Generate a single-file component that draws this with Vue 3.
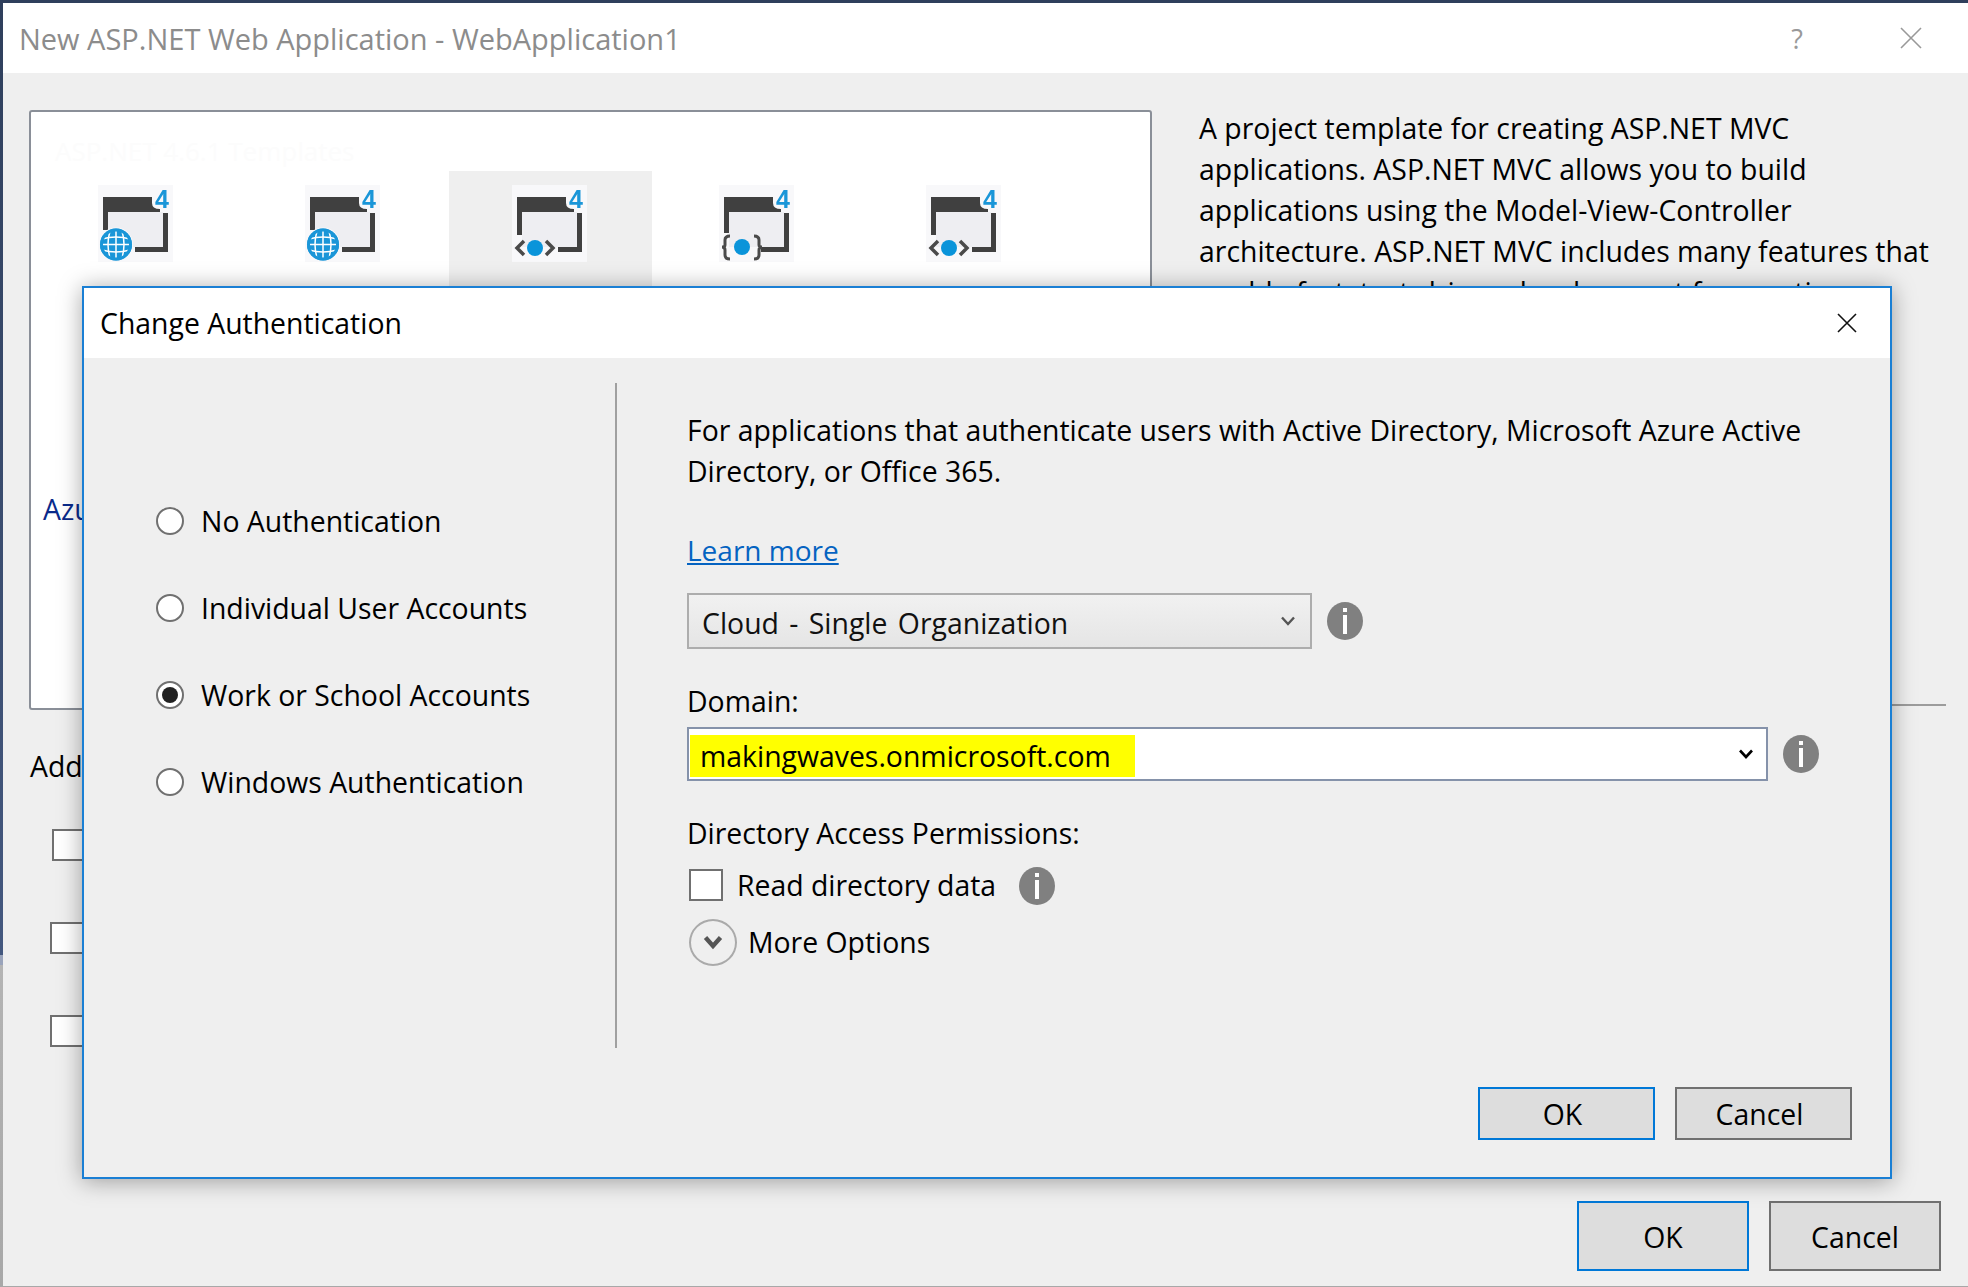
<script setup>
const tiles = [
  { id: 1, kind: 'globe' },
  { id: 2, kind: 'globe' },
  { id: 3, kind: 'code', selected: true },
  { id: 4, kind: 'brace' },
  { id: 5, kind: 'code' },
]
const authOptions = [
  { label: 'No Authentication' },
  { label: 'Individual User Accounts' },
  { label: 'Work or School Accounts', checked: true },
  { label: 'Windows Authentication' },
]
// where the window outline of each icon breaks for the overlaid badge
const wallStart = { globe: 40, code: 49, brace: 45 }
const wallEnd = { globe: 45, code: 50, brace: 48 }
</script>

<template>
  <div class="window">
    <div class="edge"></div>
    <div class="main">
      <header class="titlebar">
        <span class="title">New ASP.NET Web Application - WebApplication1</span>
        <span class="help">?</span>
        <svg class="close-grey" width="22" height="22" viewBox="0 0 22 22">
          <path d="M1 1 21 21M21 1 1 21" stroke="#999" stroke-width="1.6" fill="none" />
        </svg>
      </header>

      <div class="content">
        <div class="left">
          <div class="panel">
            <div class="faint">ASP.NET 4.6.1 Templates</div>
            <div class="tiles">
              <div v-for="t in tiles" :key="t.id" class="tile" :class="{ selected: t.selected }">
                <svg class="tile-icon" width="90" height="85" viewBox="0 0 90 85">
                  <rect x="3" y="0" width="75" height="77" fill="#f8f8fa" />
                  <rect x="13" y="27" width="55" height="35" fill="#eeeef2" />
                  <path d="M8 12H57V18Q57 24 65 24V27H8Z" fill="#404040" />
                  <rect x="8" y="27" width="5" :height="wallEnd[t.kind] - 27" fill="#404040" />
                  <rect x="68" y="28" width="5" height="39" fill="#404040" />
                  <rect :x="wallStart[t.kind]" y="62" :width="73 - wallStart[t.kind]" height="5" fill="#404040" />
                  <text x="60" y="23" class="four">4</text>
                  <g v-if="t.kind === 'globe'">
                    <circle cx="21" cy="59.5" r="17" fill="#f8f8fa" />
                    <circle cx="21" cy="59.5" r="16" fill="#1a96d8" />
                    <path d="M7 54Q21 50 35 54M7 65Q21 69 35 65M5 59.5H37" stroke="#fff" stroke-width="1.5" fill="none" />
                    <path d="M15 46Q11 59.5 15 73M27 46Q31 59.5 27 73M21 45V74" stroke="#fff" stroke-width="1.5" fill="none" />
                    <circle cx="21" cy="59.5" r="14.5" fill="none" stroke="#1a96d8" stroke-width="3" />
                  </g>
                  <g v-else-if="t.kind === 'code'">
                    <path d="M15 56 8 63 15 70M37 56 44 63 37 70" stroke="#4a4a4a" stroke-width="3.5" fill="none" />
                    <circle cx="26" cy="63" r="8" fill="#0a94da" />
                  </g>
                  <g v-else>
                    <path d="M14 51Q9 51 9 55V60Q9 62 6 62Q9 62 9 65V70Q9 74 14 74M38 51Q43 51 43 55V60Q43 62 46 62Q43 62 43 65V70Q43 74 38 74" stroke="#4a4a4a" stroke-width="3" fill="none" />
                    <circle cx="26" cy="62" r="8" fill="#0a94da" />
                  </g>
                </svg>
              </div>
            </div>
            <div class="azure">Azure</div>
          </div>
          <div class="add-label">Add folders</div>
          <div class="checks">
            <span class="check first"></span>
            <span class="check"></span>
            <span class="check"></span>
          </div>
        </div>
        <div class="right">
          <p class="desc">
            A project template for creating ASP.NET MVC<br />
            applications. ASP.NET MVC allows you to build<br />
            applications using the Model-View-Controller<br />
            architecture. ASP.NET MVC includes many features that<br />
            enable fast, test-driven development for creating
          </p>
          <div class="rule"></div>
        </div>
      </div>

      <footer class="footer">
        <button class="btn primary big">OK</button>
        <button class="btn big">Cancel</button>
      </footer>
    </div>

    <section class="dialog">
      <div class="dialog-title">
        <span>Change Authentication</span>
        <svg width="20" height="20" viewBox="0 0 20 20">
          <path d="M1 1 19 19M19 1 1 19" stroke="#111" stroke-width="1.6" fill="none" />
        </svg>
      </div>
      <div class="dialog-body">
        <div class="auth-list">
          <label v-for="opt in authOptions" :key="opt.label" class="auth-row">
            <span class="radio" :class="{ on: opt.checked }"></span>
            <span class="auth-text">{{ opt.label }}</span>
          </label>
        </div>
        <div class="settings">
          <p class="intro">
            For applications that authenticate users with Active Directory, Microsoft Azure Active<br />
            Directory, or Office 365.
          </p>
          <a class="learn">Learn more</a>
          <div class="row select-row">
            <div class="select">
              <span class="select-text">Cloud - Single Organization</span>
              <svg width="14" height="10" viewBox="0 0 14 10">
                <path d="M1 1.5 7 8 13 1.5" stroke="#555" stroke-width="2.4" fill="none" />
              </svg>
            </div>
            <svg class="info" width="36" height="38" viewBox="0 0 36 38">
              <ellipse cx="18" cy="19" rx="18" ry="19" fill="#808080" />
              <rect x="16" y="6" width="4" height="4" fill="#fff" />
              <rect x="16" y="13" width="4" height="19" fill="#fff" />
            </svg>
          </div>
          <div class="domain-label">Domain:</div>
          <div class="row domain-row">
            <div class="combo">
              <span class="marked">makingwaves.onmicrosoft.com</span>
              <svg width="14" height="10" viewBox="0 0 14 10">
                <path d="M1 1.5 7 8 13 1.5" stroke="#000" stroke-width="2.6" fill="none" />
              </svg>
            </div>
            <svg class="info" width="36" height="38" viewBox="0 0 36 38">
              <ellipse cx="18" cy="19" rx="18" ry="19" fill="#808080" />
              <rect x="16" y="6" width="4" height="4" fill="#fff" />
              <rect x="16" y="13" width="4" height="19" fill="#fff" />
            </svg>
          </div>
          <div class="perm-label">Directory Access Permissions:</div>
          <div class="row read-row">
            <span class="check read"></span>
            <span class="read-text">Read directory data</span>
            <svg class="info" width="36" height="38" viewBox="0 0 36 38">
              <ellipse cx="18" cy="19" rx="18" ry="19" fill="#808080" />
              <rect x="16" y="6" width="4" height="4" fill="#fff" />
              <rect x="16" y="13" width="4" height="19" fill="#fff" />
            </svg>
          </div>
          <div class="row more-row">
            <span class="more-circle">
              <svg width="20" height="15" viewBox="0 0 20 15">
                <path d="M2.5 2.5 10 11 17.5 2.5" stroke="#555" stroke-width="4.4" fill="none" />
              </svg>
            </span>
            <span>More Options</span>
          </div>
        </div>
      </div>
      <div class="dialog-actions">
        <button class="btn primary">OK</button>
        <button class="btn">Cancel</button>
      </div>
    </section>
  </div>
</template>

<style>
html, body {
  margin: 0;
  background: #efefef;
}
</style>

<style scoped>
.window {
  position: relative;
  display: flex;
  width: 1968px;
  height: 1287px;
  overflow: hidden;
  background: #efefef;
  color: #000;
  font-family: "Open Sans", "Noto Sans", sans-serif;
  font-size: 28.4px;
  line-height: 41px;
}
.edge {
  width: 3px;
  flex: none;
  background: linear-gradient(#2f3f5c 0, #44587f 955px, #9aa4bb 955px, #9aa4bb 965px, #b4b4b4 965px, #a8a8a8 1287px);
}
.main {
  flex: 1;
  display: flex;
  flex-direction: column;
  min-width: 0;
}
.titlebar {
  height: 70px;
  flex: none;
  display: flex;
  align-items: center;
  background: #fff;
  border-top: 3px solid #2f3f5c;
  padding: 0 46px 0 16px;
  color: #8c8c8c;
}
.title {
  flex: 1;
  font-size: 29px;
}
.help {
  margin-right: 97px;
  color: #999;
  font-size: 27px;
}
.content {
  flex: 1;
  display: flex;
  padding: 37px 0 0 26px;
  min-height: 0;
}
.left {
  width: 1123px;
  flex: none;
}
.panel {
  box-sizing: border-box;
  height: 600px;
  border: 2px solid #8a8f98;
  border-radius: 3px;
  background: #fff;
  padding: 24px 0 0 4px;
}
.faint {
  height: 31px;
  line-height: 30px;
  padding-left: 20px;
  color: #fcfcfc;
  font-size: 26px;
}
.tiles {
  display: flex;
  gap: 4px;
  margin-top: 4px;
}
.tile {
  width: 203px;
  height: 200px;
  flex: none;
}
.tile.selected {
  background: #efefef;
}
.tile-icon {
  display: block;
  margin: 14px 0 0 60px;
  filter: blur(0.5px);
}
.four {
  font-family: "Liberation Sans", sans-serif;
  font-size: 25px;
  font-weight: 700;
  fill: #1a96d8;
}
.azure {
  margin: 118px 0 0 8px;
  color: #0a2a8a;
}
.add-label {
  margin: 36px 0 0 1px;
  white-space: nowrap;
}
.checks {
  display: flex;
  flex-direction: column;
  gap: 61px;
  margin: 42px 0 0 21px;
}
.check {
  display: block;
  box-sizing: border-box;
  width: 34px;
  height: 32px;
  border: 2px solid #707070;
  background: #fff;
}
.check.first {
  margin-left: 2px;
}
.right {
  flex: 1;
  min-width: 0;
  padding-left: 47px;
}
.desc {
  height: 596px;
  margin: -2px 0 0;
  white-space: nowrap;
}
.rule {
  height: 2px;
  background: #9c9c9c;
  margin-right: 22px;
}
.footer {
  flex: none;
  display: flex;
  justify-content: flex-end;
  gap: 20px;
  padding: 0 27px 15px 0;
  border-bottom: 1px solid #a8a8a8;
}
.btn {
  box-sizing: border-box;
  width: 177px;
  height: 53px;
  padding: 2px 8px 0 0;
  border: 2px solid #707070;
  background: #dddddd;
  color: #000;
  font: inherit;
}
.btn.primary {
  border-color: #0078d7;
}
.btn.big {
  width: 172px;
  height: 70px;
  padding: 3px 0 0;
}
.dialog {
  position: absolute;
  left: 82px;
  top: 286px;
  box-sizing: border-box;
  width: 1810px;
  height: 893px;
  display: flex;
  flex-direction: column;
  border: 2px solid #1a7fd4;
  background: #efefef;
  box-shadow: 0 2px 22px rgba(0, 0, 0, 0.35);
}
.dialog-title {
  height: 70px;
  flex: none;
  display: flex;
  align-items: center;
  justify-content: space-between;
  background: #fff;
  padding: 0 33px 0 16px;
}
.dialog-body {
  flex: 1;
  display: flex;
  align-items: flex-start;
  padding-top: 25px;
  min-height: 0;
}
.auth-list {
  box-sizing: border-box;
  width: 533px;
  height: 665px;
  flex: none;
  padding-top: 94px;
  border-right: 2px solid #a0a0a0;
}
.auth-row {
  display: flex;
  align-items: center;
  gap: 17px;
  height: 87px;
  padding-left: 72px;
}
.auth-text {
  padding-top: 2px;
}
.radio {
  position: relative;
  box-sizing: border-box;
  width: 28px;
  height: 28px;
  flex: none;
  border: 2px solid #707070;
  border-radius: 50%;
  background: #fff;
}
.radio.on::after {
  content: "";
  position: absolute;
  left: 4px;
  top: 4px;
  width: 16px;
  height: 16px;
  border-radius: 50%;
  background: #222;
}
.settings {
  flex: 1;
  min-width: 0;
  padding: 27px 0 0 70px;
}
.intro {
  margin: 0;
  white-space: nowrap;
}
.learn {
  display: block;
  margin-top: 38px;
  color: #0563c1;
  font-size: 28px;
  text-decoration: underline;
}
.row {
  display: flex;
  align-items: center;
}
.select-row {
  margin-top: 22px;
  gap: 15px;
}
.select {
  box-sizing: border-box;
  width: 625px;
  height: 56px;
  display: flex;
  align-items: center;
  justify-content: space-between;
  padding: 0 15px 0 13px;
  border: 2px solid #adadad;
  background: linear-gradient(#f1f1f1, #e5e5e5);
  color: #111;
}
.select-text {
  padding-top: 4px;
  word-spacing: 3px;
}
.domain-label {
  margin-top: 32px;
}
.domain-row {
  margin-top: 5px;
  gap: 15px;
}
.combo {
  box-sizing: border-box;
  width: 1081px;
  height: 54px;
  display: flex;
  align-items: center;
  justify-content: space-between;
  padding: 0 13px 0 1px;
  border: 2px solid #8592aa;
  background: #fff;
}
.marked {
  display: block;
  box-sizing: border-box;
  width: 445px;
  height: 42px;
  margin-top: 4px;
  padding-left: 10px;
  background: #ffff00;
  line-height: 42px;
  white-space: nowrap;
}
.perm-label {
  margin-top: 32px;
}
.read-row {
  margin-top: 15px;
  height: 32px;
}
.check.read {
  margin-left: 2px;
}
.read-text {
  margin-left: 14px;
  padding-top: 1px;
}
.read-row .info {
  margin: 2px 0 0 23px;
}
.more-row {
  margin-top: 18px;
  gap: 11px;
}
.more-circle {
  box-sizing: border-box;
  width: 48px;
  height: 47px;
  margin-left: 2px;
  display: flex;
  align-items: center;
  justify-content: center;
  border: 2.5px solid #aaa;
  border-radius: 50%;
}
.dialog-actions {
  flex: none;
  display: flex;
  justify-content: flex-end;
  gap: 20px;
  padding: 0 38px 37px 0;
}
</style>
